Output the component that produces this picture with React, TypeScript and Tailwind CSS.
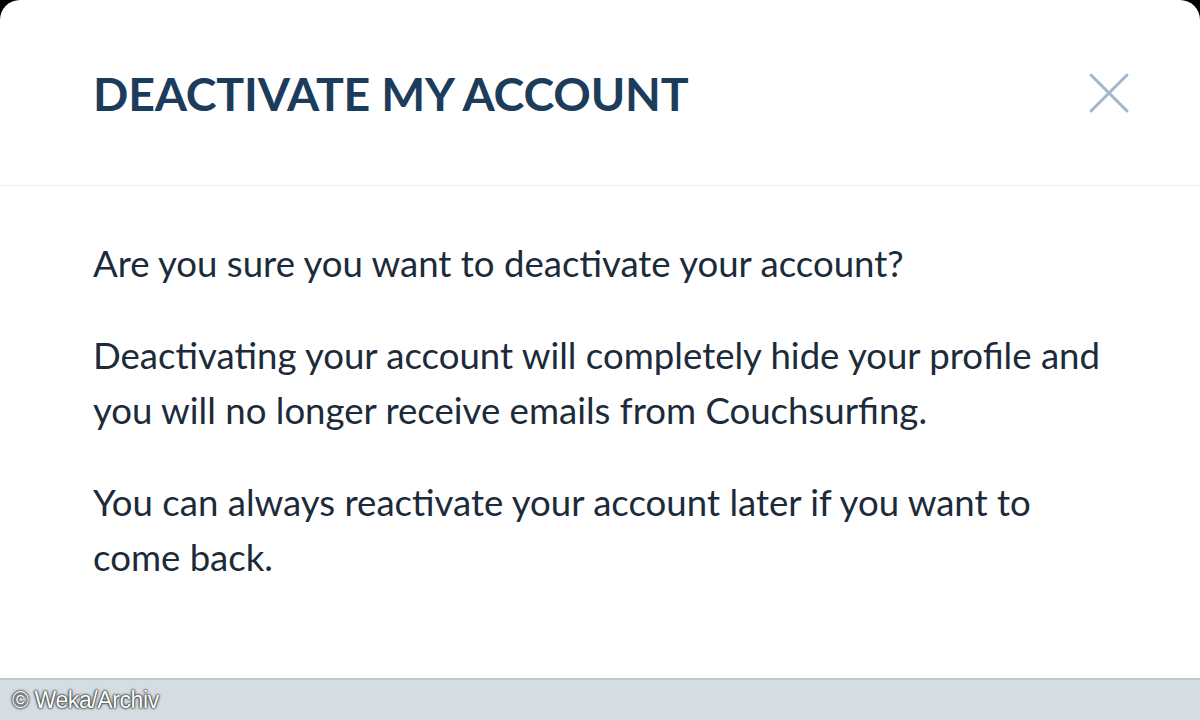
import { X } from 'lucide-react'

export default function App() {
  return (
    <div className="w-[1200px] h-[720px] bg-black overflow-hidden" style={{ fontFamily: 'Lato, "Noto Sans", sans-serif' }}>
      <div className="flex flex-col h-full bg-white rounded-t-[20px] overflow-hidden">
        {/* Header */}
        <div className="flex items-center justify-between h-[186px] shrink-0 pl-[93px] pr-[55px] border-b border-[#eceff0]">
          <h1 className="text-[46.5px] font-bold leading-none tracking-[-0.2px] text-[#1b3c5b] pt-[2px]">
            DEACTIVATE MY ACCOUNT
          </h1>
          <button className="text-[#9fb6cc]">
            <X size={72} strokeWidth={1} />
          </button>
        </div>

        {/* Body */}
        <div className="flex-1 pl-[93px] pr-[88px] pt-[50px] text-[36.6px] leading-[55px] text-[#1c2b3a] flex flex-col gap-[37px]">
          <p>Are you sure you want to deactivate your account?</p>
          <p>
            Deactivating your account will completely hide your profile and you will no longer receive emails from
            Couchsurfing.
          </p>
          <p>You can always reactivate your account later if you want to come back.</p>
        </div>

        {/* Footer strip */}
        <div className="h-[42px] shrink-0 bg-[#d5dde3] border-t-2 border-[#bac9cd] flex items-center pl-[12px]">
          <span
            className="text-[23px] text-white tracking-[-0.4px]"
            style={{ fontFamily: '"Liberation Sans", Arial, sans-serif', textShadow: '0 0 3px #222, 0 0 2px #222, 0 0 1px #222' }}
          >
            © Weka/Archiv
          </span>
        </div>
      </div>
    </div>
  )
}
